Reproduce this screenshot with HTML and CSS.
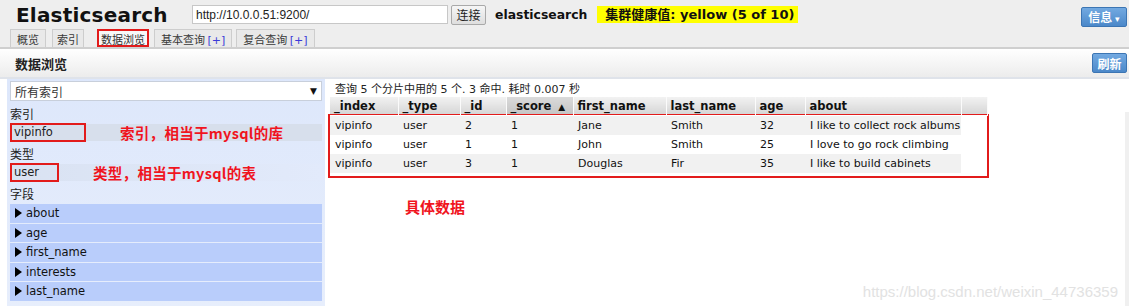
FILE: index.html
```html
<!DOCTYPE html>
<html lang="zh">
<head>
<meta charset="utf-8">
<title>Elasticsearch</title>
<link rel="stylesheet" href="styles.css">
</head>
<body>
<div class="header">
  <div class="topbar">
    <h1 class="logo">Elasticsearch</h1>
    <input class="url" type="text" value="http://10.0.0.51:9200/">
    <button class="connect">连接</button>
    <span class="cluster">elasticsearch</span>
    <span class="health">集群健康值: yellow (5 of 10)</span>
    <span class="spacer"></span>
    <button class="btn-blue info">信息 <span class="caret">▾</span></button>
  </div>
  <div class="tabs">
    <span class="tab">概览</span>
    <span class="tab">索引</span>
    <span class="tab active">数据浏览</span>
    <span class="tab">基本查询 <span class="plus">[+]</span></span>
    <span class="tab">复合查询 <span class="plus">[+]</span></span>
  </div>
</div>
<div class="toolbar">
  <span class="toolbar-title">数据浏览</span>
  <button class="btn-blue refresh">刷新</button>
</div>
<div class="main">
  <div class="sidebar">
    <div class="select"><span>所有索引</span><span class="arrow">▼</span></div>
    <div class="label">索引</div>
    <div class="item item-index"><span class="boxed boxed-index">vipinfo</span><span class="note note-index">索引，相当于mysql的库</span></div>
    <div class="label">类型</div>
    <div class="item item-type"><span class="boxed boxed-type">user</span><span class="note note-type">类型，相当于mysql的表</span></div>
    <div class="label">字段</div>
    <div class="fields">
      <div class="field"><span class="tri"></span>about</div>
      <div class="field"><span class="tri"></span>age</div>
      <div class="field"><span class="tri"></span>first_name</div>
      <div class="field"><span class="tri"></span>interests</div>
      <div class="field"><span class="tri"></span>last_name</div>
    </div>
  </div>
  <div class="content">
    <div class="summary">查询 5 个分片中用的 5 个. 3 命中. 耗时 0.007 秒</div>
    <table class="results">
      <colgroup>
        <col class="c-index"><col class="c-type"><col class="c-id"><col class="c-score"><col class="c-first"><col class="c-last"><col class="c-age"><col class="c-about"><col class="c-pad">
      </colgroup>
      <thead>
        <tr>
          <th>_index</th>
          <th>_type</th>
          <th>_id</th>
          <th class="sorted">_score <span class="sort">▲</span></th>
          <th>first_name</th>
          <th>last_name</th>
          <th>age</th>
          <th>about</th>
          <th></th>
        </tr>
      </thead>
      <tbody>
        <tr class="odd"><td>vipinfo</td><td>user</td><td>2</td><td>1</td><td>Jane</td><td>Smith</td><td>32</td><td>I like to collect rock albums</td><td class="pad"></td></tr>
        <tr class="even"><td>vipinfo</td><td>user</td><td>1</td><td>1</td><td>John</td><td>Smith</td><td>25</td><td>I love to go rock climbing</td><td class="pad"></td></tr>
        <tr class="odd"><td>vipinfo</td><td>user</td><td>3</td><td>1</td><td>Douglas</td><td>Fir</td><td>35</td><td>I like to build cabinets</td><td class="pad"></td></tr>
        <tr class="spacer-row"><td colspan="9"></td></tr>
      </tbody>
    </table>
    <div class="data-note">具体数据</div>
  </div>
  <div class="edge"></div>
</div>
<div class="watermark">https://blog.csdn.net/weixin_44736359</div>
</body>
</html>
```

FILE: styles.css
```css
html, body {
  margin: 0;
  padding: 0;
  background: #fff;
  font-family: "DejaVu Sans", Verdana, "Noto Sans CJK SC", sans-serif;
  font-size: 11px;
  color: #111;
  width: 1129px;
  height: 306px;
  overflow: hidden;
  position: relative;
}

.header {
  background: #eeeeee;
  height: 47px;
  border-bottom: 2px solid #cfcfcf;
}

.topbar {
  display: flex;
  align-items: center;
  height: 29px;
  padding-left: 16px;
  padding-right: 2px;
}

.logo {
  margin: 0;
  font-size: 20px;
  font-weight: bold;
  color: #111;
  width: 176px;
  letter-spacing: 0.2px;
}

.url {
  width: 248px;
  height: 17px;
  border: 1px solid #c7c7c7;
  padding: 0 3px;
  font-family: "Liberation Sans", Arial, sans-serif;
  font-size: 12px;
  color: #222;
  background: #fff;
  box-sizing: content-box;
}

.connect {
  margin-left: 3px;
  height: 20px;
  width: 35px;
  padding: 0;
  border: 1px solid #a9a9a9;
  background: linear-gradient(#f6f6f6, #dedede);
  font-family: "Noto Sans CJK SC", sans-serif;
  font-size: 12px;
  color: #222;
  border-radius: 2px;
}

.cluster {
  margin-left: 9px;
  font-weight: bold;
  font-size: 12.4px;
}

.health {
  margin-left: 10px;
  background: #ffff00;
  font-weight: bold;
  font-size: 13px;
  padding: 0 4px 0 8px;
  line-height: 17px;
}

.spacer { flex: 1; }

.btn-blue {
  background: linear-gradient(#72a9e1, #4b88c9);
  border: 1px solid #3c75b3;
  color: #fff;
  font-family: "Noto Sans CJK SC", sans-serif;
  font-size: 12px;
  font-weight: bold;
  border-radius: 2px;
  padding: 0 5px;
  height: 20px;
  line-height: 17px;
}

.info { width: 46px; margin-top: 4px; }
.caret { font-size: 9px; font-family: "DejaVu Sans", sans-serif; }

.tabs {
  display: flex;
  align-items: flex-end;
  padding-left: 10px;
  height: 18px;
}

.tab {
  font-family: "Noto Sans CJK SC", sans-serif;
  font-size: 11px;
  color: #3a3a3a;
  border: 1px solid #cdcdcd;
  border-bottom: none;
  background: #e9e9e9;
  padding: 0 6px;
  height: 18px;
  line-height: 18px;
  box-sizing: border-box;
  margin-right: 5px;
}

.tab:first-child { margin-right: 6px; }
.tab:nth-child(2) { padding: 0 4px; }
.tab:nth-child(4) { margin-right: 4px; }

.tab.active {
  background: #f7f7f7;
  border: 2px solid #e21b1b;
  color: #333;
  padding: 0 2px;
  margin-left: 8px;
  line-height: 16px;
}

.plus {
  color: #3a3ad8;
  font-family: "DejaVu Sans", sans-serif;
  font-size: 11px;
}

.toolbar {
  display: flex;
  align-items: center;
  justify-content: space-between;
  height: 28px;
  padding: 0 2px 0 15px;
  background: linear-gradient(#ffffff, #ececec);
  border-bottom: 2px solid #dfe3ea;
}

.toolbar-title {
  font-family: "Noto Sans CJK SC", sans-serif;
  font-weight: bold;
  font-size: 13px;
  color: #222;
}

.refresh { width: 35px; padding: 0; }

.main {
  display: flex;
  align-items: flex-start;
}

.sidebar {
  margin-left: 7px;
  width: 312px;
  height: 226px;
  padding: 2px 3px 0 3px;
  background: linear-gradient(#dde7fb, #e7eefc);
}

.select {
  display: flex;
  justify-content: space-between;
  align-items: center;
  height: 18px;
  background: #fff;
  border: 1px solid #c8cfdb;
  padding: 0 4px;
  font-family: "Noto Sans CJK SC", sans-serif;
  font-size: 12px;
  color: #333;
}

.arrow { font-size: 9px; color: #111; font-family: "DejaVu Sans", sans-serif; }

.label {
  font-family: "Noto Sans CJK SC", sans-serif;
  font-size: 12px;
  color: #222;
  height: 18px;
  line-height: 18px;
  padding-top: 4px;
}

.label:nth-of-type(3) { padding-top: 2px; }

.item {
  display: flex;
  align-items: center;
  height: 17px;
  margin-top: 1px;
}

.item-index { background: #d7dfec; }
.item-type { background: linear-gradient(90deg, #d9e2f2, #e2eafb); }

.boxed {
  border: 2px solid #e21b1b;
  height: 15px;
  line-height: 14px;
  padding-left: 2px;
  color: #222;
  font-size: 11.5px;
}

.boxed-index { width: 70px; }
.boxed-type { width: 43px; }

.note {
  color: #f0141e;
  font-family: "Noto Sans CJK SC", sans-serif;
  font-size: 14.5px;
  font-weight: bold;
  letter-spacing: 0.3px;
}

.note-index { margin-left: 34px; }
.note-type { margin-left: 34px; }

.fields {
  display: flex;
  flex-direction: column;
  gap: 1px;
  margin-top: 1px;
}

.field {
  display: flex;
  align-items: center;
  background: #b9cdfb;
  height: 18.5px;
  padding-left: 5px;
  color: #111;
  font-size: 11.5px;
}

.tri {
  width: 0;
  height: 0;
  border-top: 5px solid transparent;
  border-bottom: 5px solid transparent;
  border-left: 7px solid #000;
  margin-right: 4px;
}

.content {
  margin-left: 5px;
  padding-top: 3px;
}

.summary {
  font-family: "DejaVu Sans", "Noto Sans CJK SC", sans-serif;
  font-size: 11px;
  height: 15px;
  line-height: 15px;
  padding-left: 5px;
  color: #222;
}

.results {
  border-collapse: collapse;
  table-layout: fixed;
  width: 657px;
}

.c-index { width: 68px; }
.c-type { width: 62px; }
.c-id { width: 46px; }
.c-score { width: 67px; }
.c-first { width: 93px; }
.c-last { width: 89px; }
.c-age { width: 50px; }
.c-about { width: 156px; }
.c-pad { width: 26px; }

.results th {
  height: 18px;
  padding: 0 0 0 4px;
  text-align: left;
  font-weight: bold;
  font-size: 11.5px;
  line-height: 16px;
  color: #111;
  background: linear-gradient(#f2f2f2, #d4d4d4);
  border-right: 1px solid #fbfbfb;
  white-space: nowrap;
  vertical-align: middle;
}

.results th.sorted { background: linear-gradient(#dadada, #c4c4c4); }
.sort { font-size: 9px; margin-left: 3px; }

.results td {
  height: 19px;
  padding: 0 0 0 5px;
  white-space: nowrap;
  color: #111;
}

.results tbody tr:first-child td { border-top: 1px solid #fff; }
.results tr.odd td { background: #f1f1f1; }
.results tr.even td { background: #fff; }
.results td.pad { background: #fff !important; }
.results tr.spacer-row td { height: 3px; background: #fff; }

.results tbody { box-shadow: 0 0 0 2px #e21b1b; }

.data-note {
  margin-top: 20px;
  padding-left: 75px;
  color: #f0141e;
  font-family: "Noto Sans CJK SC", sans-serif;
  font-size: 15px;
  font-weight: bold;
}

.edge {
  margin-left: auto;
  margin-top: 33px;
  width: 4px;
  height: 200px;
  background: #f0f0f0;
}

.watermark {
  position: absolute;
  right: 11px;
  bottom: 6px;
  font-family: "Liberation Sans", Arial, sans-serif;
  font-size: 15px;
  color: #e2e2e2;
}
```
